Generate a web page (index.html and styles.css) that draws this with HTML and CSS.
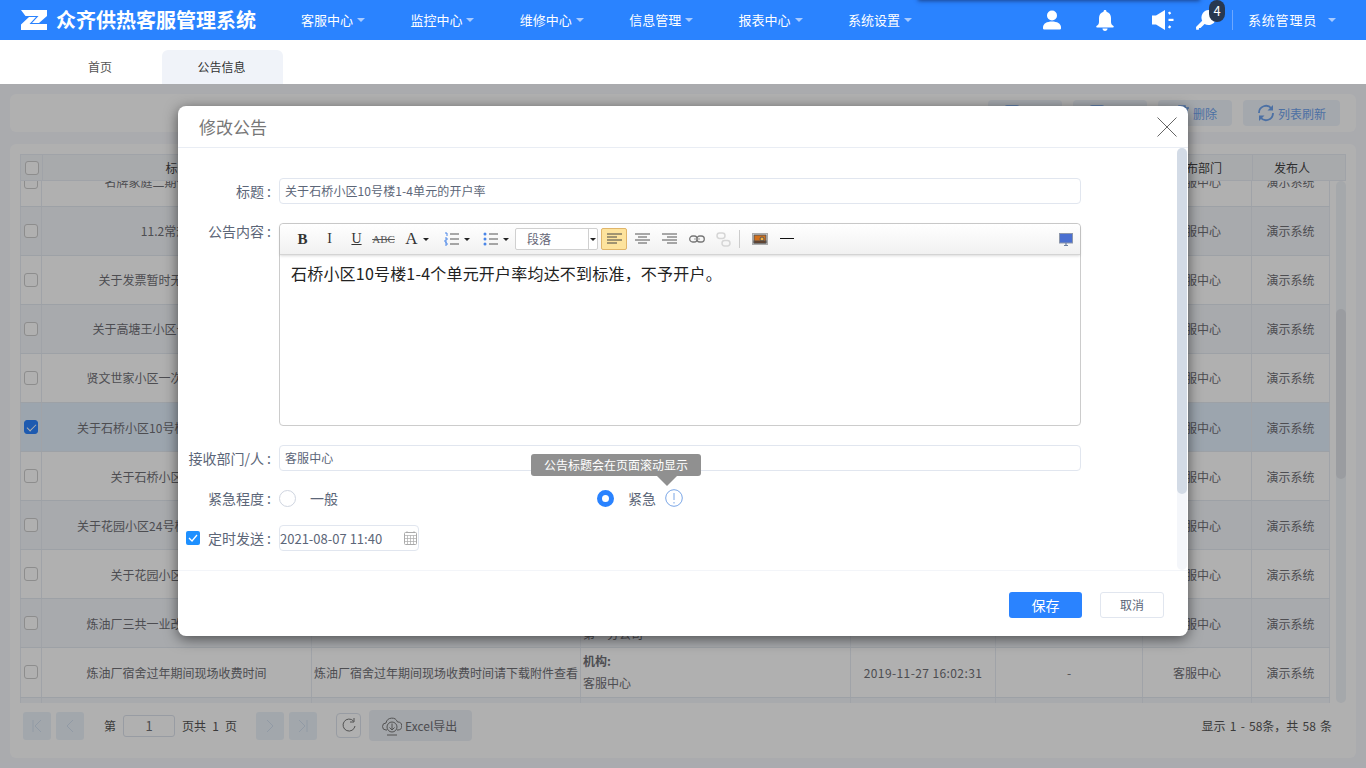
FILE: index.html
```html
<!DOCTYPE html>
<html lang="zh-CN">
<head>
  <meta charset="utf-8">
  <title>众齐供热客服管理系统</title>
  <link rel="stylesheet" href="styles.css">
</head>
<body>

<div class="topbar">
  <div class="top-shade"></div>
  <svg class="logo" width="26" height="20" viewBox="0 0 26 20">
    <path fill="#fff" d="M0 0H26V6L18 13H11L17.500 6H4.500Z"/>
    <path fill="#fff" d="M0 20V14.500L8 7H15L8.500 14H26V20Z"/>
  </svg>
  <div class="sys-name">众齐供热客服管理系统</div>
  <ul class="nav">
    <li>客服中心<i class="caret"></i></li>
    <li>监控中心<i class="caret"></i></li>
    <li>维修中心<i class="caret"></i></li>
    <li>信息管理<i class="caret"></i></li>
    <li>报表中心<i class="caret"></i></li>
    <li>系统设置<i class="caret"></i></li>
  </ul>
  <div class="top-tools">
    <svg class="t-user" width="18" height="20" viewBox="0 0 18 20"><circle cx="9" cy="5.500" r="5"/><path d="M1 19.500C0 19.500 0 18.500 0 17.500C0 13.500 4 11.500 9 11.500C14 11.500 18 13.500 18 17.500C18 18.500 18 19.500 17 19.500Z"/></svg>
    <svg class="t-bell" width="18" height="21" viewBox="0 0 18 21"><path d="M9 0C10 0 10.500 .7 10.500 1.700C13.500 2.500 15 5 15 8V12C15 14 16 15 17.500 16C18 16.500 17.800 17.500 17 17.500H1C.2 17.500 0 16.500 .5 16C2 15 3 14 3 12V8C3 5 4.500 2.500 7.500 1.700C7.500 .7 8 0 9 0Z"/><path d="M6.500 18.500H11.500C11.500 20 10.500 21 9 21C7.500 21 6.500 20 6.500 18.500Z"/></svg>
    <svg class="t-horn" width="22" height="20" viewBox="0 0 22 20"><path d="M0 5.500H4L13 0V20L4 14.500H0Z"/><rect x="16.500" y="8.800" width="5" height="2.200"/><path d="M16 2.500L18 1.500L19.200 3.600L17.200 4.700Z"/><path d="M16 17.500L18 18.500L19.200 16.400L17.200 15.300Z"/></svg>
    <div class="t-key">
      <svg width="20" height="20" viewBox="0 0 20 20"><path d="M12.500 0A7.500 7.500 0 1 1 8.600 13.900L4.500 18L3 18L2.800 19.800L.2 19.800L0 17L6.200 10.800A7.500 7.500 0 0 1 12.500 0Z"/></svg>
      <span class="badge">4</span>
    </div>
    <div class="t-sep"></div>
    <div class="t-name">系统管理员</div>
    <i class="caret t-caret"></i>
  </div>
</div>

<div class="tabs">
  <div class="tab">首页</div>
  <div class="tab on">公告信息</div>
</div>

<div class="content">
  <div class="toolcard">
    <div class="tbtn w74"><svg width="16" height="16" viewBox="0 0 16 16"><rect x="1" y="1" width="14" height="14" rx="2"/></svg></div>
    <div class="tbtn w74"><svg width="16" height="16" viewBox="0 0 16 16"><rect x="1" y="1" width="14" height="14" rx="2"/></svg></div>
    <div class="tbtn w74"><svg width="16" height="16" viewBox="0 0 16 16"><path d="M1 3H15M5 3V1H11V3M3 3V15H13V3"/></svg>删除</div>
    <div class="tbtn w96"><svg width="18" height="18" viewBox="0 0 18 18"><path d="M2 9A7 7 0 0 1 14.500 4.500M16 9A7 7 0 0 1 3.500 13.500" stroke-width="1.800"/><path class="fill" d="M16 1V6.500H10.500Z"/><path class="fill" d="M2 17V11.500H7.500Z"/></svg>列表刷新</div>
  </div>

  <div class="listcard">
    <div class="thead">
      <div class="hcell c0"><i class="chk"></i></div>
      <div class="hcell c1">标题</div>
      <div class="hcell c2"></div>
      <div class="hcell c3"></div>
      <div class="hcell c4"></div>
      <div class="hcell c5"></div>
      <div class="hcell c6">发布部门</div>
      <div class="hcell c7">发布人</div>
    </div>
    <div class="tbody-wrap">
      <div class="tbody">
        <div class="row"><div class="c0"><i class="chk"></i></div><div class="c1">名牌家庭二期供热运行通知</div><div class="c2"></div><div class="c3"></div><div class="c4"></div><div class="c5"></div><div class="c6">客服中心</div><div class="c7">演示系统</div></div>
        <div class="row"><div class="c0"><i class="chk"></i></div><div class="c1">11.2常规通知</div><div class="c2"></div><div class="c3"></div><div class="c4"></div><div class="c5"></div><div class="c6">客服中心</div><div class="c7">演示系统</div></div>
        <div class="row"><div class="c0"><i class="chk"></i></div><div class="c1">关于发票暂时无法开具的通知</div><div class="c2"></div><div class="c3"></div><div class="c4"></div><div class="c5"></div><div class="c6">客服中心</div><div class="c7">演示系统</div></div>
        <div class="row"><div class="c0"><i class="chk"></i></div><div class="c1">关于高塘王小区一次网检修通知</div><div class="c2"></div><div class="c3"></div><div class="c4"></div><div class="c5"></div><div class="c6">客服中心</div><div class="c7">演示系统</div></div>
        <div class="row"><div class="c0"><i class="chk"></i></div><div class="c1">贤文世家小区一次网管线检修通知</div><div class="c2"></div><div class="c3"></div><div class="c4"></div><div class="c5"></div><div class="c6">客服中心</div><div class="c7">演示系统</div></div>
        <div class="row sel"><div class="c0"><i class="chk on"></i></div><div class="c1">关于石桥小区10号楼1-4单元的开户率</div><div class="c2"></div><div class="c3"></div><div class="c4"></div><div class="c5"></div><div class="c6">客服中心</div><div class="c7">演示系统</div></div>
        <div class="row"><div class="c0"><i class="chk"></i></div><div class="c1">关于石桥小区的开户通知</div><div class="c2"></div><div class="c3"></div><div class="c4"></div><div class="c5"></div><div class="c6">客服中心</div><div class="c7">演示系统</div></div>
        <div class="row"><div class="c0"><i class="chk"></i></div><div class="c1">关于花园小区24号楼1-2单元的开户率</div><div class="c2"></div><div class="c3"></div><div class="c4"></div><div class="c5"></div><div class="c6">客服中心</div><div class="c7">演示系统</div></div>
        <div class="row"><div class="c0"><i class="chk"></i></div><div class="c1">关于花园小区的开户通知</div><div class="c2"></div><div class="c3"></div><div class="c4"></div><div class="c5"></div><div class="c6">客服中心</div><div class="c7">演示系统</div></div>
        <div class="row"><div class="c0"><i class="chk"></i></div><div class="c1">炼油厂三共一业改造现场收费时间</div><div class="c2"></div><div class="c3"><b>机构:</b><span>第一分公司</span></div><div class="c4"></div><div class="c5"></div><div class="c6">客服中心</div><div class="c7">演示系统</div></div>
        <div class="row"><div class="c0"><i class="chk"></i></div><div class="c1">炼油厂宿舍过年期间现场收费时间</div><div class="c2">炼油厂宿舍过年期间现场收费时间请下载附件查看</div><div class="c3"><b>机构:</b><span>客服中心</span></div><div class="c4">2019-11-27 16:02:31</div><div class="c5">-</div><div class="c6">客服中心</div><div class="c7">演示系统</div></div>
        <div class="row"><div class="c0"><i class="chk"></i></div><div class="c1"></div><div class="c2"></div><div class="c3"></div><div class="c4"></div><div class="c5"></div><div class="c6"></div><div class="c7"></div></div>
      </div>
      <div class="vbar"><div class="vthumb"></div></div>
    </div>

    <div class="pager">
      <div class="pbtn"><svg width="12" height="14" viewBox="0 0 12 14"><path d="M2 1V13M10 1L4 7L10 13"/></svg></div>
      <div class="pbtn"><svg width="12" height="14" viewBox="0 0 12 14"><path d="M9 1L3 7L9 13"/></svg></div>
      <span class="ptext first">第</span>
      <div class="pinput">1</div>
      <span class="ptext wide">页共 1 页</span>
      <div class="pbtn next"><svg width="12" height="14" viewBox="0 0 12 14"><path d="M3 1L9 7L3 13"/></svg></div>
      <div class="pbtn"><svg width="12" height="14" viewBox="0 0 12 14"><path d="M2 1L8 7L2 13M10 1V13"/></svg></div>
      <div class="prefresh"><svg width="14" height="15" viewBox="0 0 14 15"><path d="M11.500 3A6 6 0 1 0 13 8"/><path d="M12 0V4H8"/></svg></div>
      <div class="pexcel"><svg width="20" height="20" viewBox="0 0 20 20"><path d="M5 14H4A3.500 3.500 0 0 1 4 7A6 6 0 0 1 15.500 6A4 4 0 0 1 16 14H15"/><circle cx="10" cy="11" r="5"/><path d="M10 7.500V13.500M7.500 11.500L10 14L12.500 11.500M5 19H15"/></svg>Excel导出</div>
      <div class="pinfo">显示 1 - 58条，共 58 条</div>
    </div>
  </div>

  <div class="mask"></div>

  <div class="dialog">
    <div class="d-title">
      修改公告
      <svg class="d-close" width="20" height="20" viewBox="0 0 20 20"><path d="M.5 .5L19.500 19.500M19.500 .5L.5 19.500"/></svg>
    </div>
    <div class="d-body">
      <div class="frow">
        <label class="flabel">标题 :</label>
        <div class="finput">关于石桥小区10号楼1-4单元的开户率</div>
      </div>
      <div class="frow">
        <label class="flabel top">公告内容 :</label>
        <div class="editor">
          <div class="etools">
            <span class="eb tx"><b>B</b></span>
            <span class="eb tx"><em>I</em></span>
            <span class="eb tx"><u>U</u></span>
            <span class="eb tx abc"><s>ABC</s></span>
            <span class="eb dd w40 tx big">A<i class="mini"></i></span>
            <span class="eb dd w39"><svg width="15" height="14" viewBox="0 0 15 14"><path class="num" d="M1 1H3V4M1 6H3V8H1V10H3M1 11H3V13H1"/><path d="M6 2H15M6 7H15M6 12H15"/></svg><i class="mini"></i></span>
            <span class="eb dd w39"><svg width="15" height="14" viewBox="0 0 15 14"><circle class="dot" cx="2" cy="2" r="1.500"/><circle class="dot" cx="2" cy="7" r="1.500"/><circle class="dot" cx="2" cy="12" r="1.500"/><path d="M6 2H15M6 7H15M6 12H15"/></svg><i class="mini"></i></span>
            <span class="esel"><span class="esel-text">段落</span><span class="esel-arrow"><i class="mini"></i></span></span>
            <span class="eb active"><svg width="15" height="12" viewBox="0 0 15 12"><path d="M0 1H15M0 4H10M0 7H15M0 10H10"/></svg></span>
            <span class="eb ml2"><svg width="15" height="12" viewBox="0 0 15 12"><path d="M0 1H15M3 4H12M0 7H15M3 10H12"/></svg></span>
            <span class="eb"><svg width="15" height="12" viewBox="0 0 15 12"><path d="M0 1H15M5 4H15M0 7H15M5 10H15"/></svg></span>
            <span class="eb"><svg width="16" height="8" viewBox="0 0 16 8"><rect x=".7" y="1" width="7.500" height="6" rx="3" stroke="#777" stroke-width="1.300"/><rect x="7.800" y="1" width="7.500" height="6" rx="3" stroke="#777" stroke-width="1.300"/><path d="M5 4H11" stroke="#999"/></svg></span>
            <span class="eb"><svg width="15" height="15" viewBox="0 0 15 15"><rect x="1" y="1" width="8" height="5.500" rx="2.700" stroke="#d6d6d6" stroke-width="1.500"/><rect x="6" y="8.500" width="8" height="5.500" rx="2.700" stroke="#d6d6d6" stroke-width="1.500"/></svg></span>
            <span class="esep"></span>
            <span class="eb"><svg width="16" height="12" viewBox="0 0 16 12"><rect x=".5" y=".5" width="15" height="11" fill="#eee" stroke="#aaa"/><rect x="2" y="2" width="12" height="8" fill="#d2701c"/><circle cx="10" cy="6" r="2" fill="#f5b342"/><rect x="2" y="8" width="12" height="2" fill="#6a3412"/></svg></span>
            <span class="eb"><svg width="14" height="2" viewBox="0 0 14 2"><path d="M0 .5H14" stroke="#111"/></svg></span>
            <span class="eb right"><svg width="14" height="13" viewBox="0 0 14 13"><rect x=".5" y=".5" width="13" height="9.500" fill="#4a6fd0" stroke="#8d97ab"/><path d="M5 12.500H9M7 10V12" stroke="#6d7f9f" stroke-width="1.200"/></svg></span>
          </div>
          <div class="etext">石桥小区10号楼1-4个单元开户率均达不到标准，不予开户。</div>
        </div>
      </div>
      <div class="frow">
        <label class="flabel">接收部门/人 :</label>
        <div class="finput">客服中心</div>
      </div>
      <div class="frow radios">
        <label class="flabel">紧急程度 :</label>
        <div class="ropt first"><i class="radio"></i><span>一般</span></div>
        <div class="ropt"><i class="radio on"></i><span>紧急</span>
          <svg class="info" width="18" height="18" viewBox="0 0 18 18"><circle cx="9" cy="9" r="8.300"/><path d="M9 4V11M9 13V14.500"/></svg>
        </div>
        <div class="tip">公告标题会在页面滚动显示</div>
      </div>
      <div class="frow dates">
        <label class="flabel"><i class="chk2"><svg width="10" height="8" viewBox="0 0 10 8"><path d="M1 4L4 7L9 1"/></svg></i>定时发送 :</label>
        <div class="fdate">2021-08-07 11:40
          <svg width="13" height="14" viewBox="0 0 13 14"><rect x=".5" y="1.500" width="12" height="12" rx="1"/><path d="M0 4.500H13M3 0V2M10 0V2M0 7.500H13M0 10.500H13M3.500 4.500V14M6.500 4.500V14M9.500 4.500V14" stroke-width=".7"/></svg>
        </div>
      </div>
      <div class="dbar"><div class="dthumb"></div></div>
    </div>
    <div class="d-foot">
      <div class="btn-save">保存</div>
      <div class="btn-cancel">取消</div>
    </div>
  </div>
</div>

</body>
</html>
```

FILE: styles.css
```css
* {
  box-sizing: border-box;
}
html, body {
  margin: 0;
  height: 768px;
  overflow: hidden;
  background: #fff;
  font-family: "Noto Sans CJK SC", "Noto Sans", sans-serif;
  font-size: 12px;
  color: #707076;
}
i, em {
  font-style: normal;
}

/* top bar */
.topbar {
  position: relative;
  display: flex;
  align-items: center;
  height: 40px;
  padding-left: 21px;
  overflow: hidden;
  background: #2a83ff;
  color: #fff;
}
.top-shade {
  position: absolute;
  left: 918px;
  top: -20px;
  width: 282px;
  height: 20px;
  box-shadow: 0 1px 4px rgba(20, 40, 90, .7);
  background: #2a83ff;
}
.logo {
  flex: none;
}
.sys-name {
  margin-left: 9px;
  width: 245px;
  font-size: 20px;
  font-weight: 700;
  line-height: 40px;
  white-space: nowrap;
}
.nav {
  display: flex;
  margin: 0;
  padding: 0;
  list-style: none;
}
.nav li {
  width: 109.400px;
  font-size: 13px;
  line-height: 40px;
  white-space: nowrap;
}
.caret {
  display: inline-block;
  margin-left: 4px;
  vertical-align: 3px;
  border-left: 4px solid transparent;
  border-right: 4px solid transparent;
  border-top: 4px solid #a9cbff;
}
.top-tools {
  position: absolute;
  left: 1043px;
  top: 0;
  display: flex;
  align-items: center;
  height: 40px;
}
.top-tools svg {
  fill: #fff;
  flex: none;
}
.t-bell {
  margin-left: 35px;
}
.t-horn {
  margin-left: 38px;
}
.t-key {
  position: relative;
  width: 25px;
  height: 20px;
  margin-left: 22px;
}
.badge {
  position: absolute;
  left: 13px;
  top: -10px;
  width: 16px;
  height: 22px;
  border-radius: 8px;
  background: #283850;
  font-size: 13px;
  line-height: 22px;
  text-align: center;
}
.t-sep {
  width: 1px;
  height: 20px;
  margin-left: 11px;
  background: #6ea8ff;
}
.t-name {
  margin-left: 15px;
  padding-bottom: 2px;
  font-size: 13px;
  letter-spacing: .8px;
  white-space: nowrap;
}
.t-caret {
  margin-left: 11px;
}

/* tabs */
.tabs {
  display: flex;
  align-items: flex-end;
  height: 44px;
  padding-left: 38px;
  background: #fff;
}
.tab {
  width: 124px;
  height: 34px;
  border-radius: 6px 6px 0 0;
  color: #555;
  line-height: 34px;
  text-align: center;
}
.tab.on {
  width: 121px;
  padding-right: 2px;
  background: #f0f3f9;
  color: #333;
}

/* page under the mask */
.content {
  position: relative;
  height: 684px;
  padding: 10px;
  overflow: hidden;
  background: #f6f8fd;
}
.toolcard {
  display: flex;
  justify-content: flex-end;
  gap: 11px;
  height: 38px;
  padding: 6px 16px 0 0;
  border-radius: 6px;
  background: #fff;
}
.tbtn {
  display: flex;
  align-items: center;
  height: 26px;
  padding-left: 14px;
  border-radius: 4px;
  background: #eef3fb;
  color: #6ea3ee;
}
.w74 {
  width: 74px;
  padding-left: 16px;
}
.w96 {
  width: 97px;
}
.tbtn svg {
  margin-right: 3px;
  fill: none;
  stroke: #6ea3ee;
  stroke-width: 1.500;
}
.tbtn svg .fill {
  fill: #6ea3ee;
  stroke: none;
}
.listcard {
  height: 614px;
  margin-top: 12px;
  padding: 10px 10px 0;
  border-radius: 6px;
  background: #fff;
}
.thead {
  display: grid;
  grid-template-columns: 22px 270px 269px 270px 145px 147px 109px 94px;
  height: 27px;
  border: 1px solid #e8edf4;
  background: #f4f6fa;
  color: #444;
  line-height: 25px;
  text-align: center;
}
.hcell {
  border-right: 1px solid #e8edf4;
}
.hcell.c7 {
  border-right: 0;
  padding-right: 16px;
}
.hcell.c0 {
  display: flex;
  align-items: center;
  justify-content: center;
  padding-left: 1px;
}
.tbody-wrap {
  position: relative;
  height: 522px;
  overflow: hidden;
}
.tbody {
  width: 1310px;
  margin-top: -23.500px;
}
.row {
  display: grid;
  grid-template-columns: 22px 270px 269px 270px 145px 147px 109px 78px;
  height: 49.100px;
  border-bottom: 1px solid #e4e9f1;
  background: #fff;
}
.row:nth-child(even) {
  background: #f3f6fb;
}
.row.sel {
  background: #e3effd;
}
.row > div {
  display: flex;
  align-items: center;
  justify-content: center;
  padding: 0 2px;
  border-right: 1px solid #e8edf4;
  white-space: nowrap;
}
.row > div:first-child {
  border-left: 1px solid #e8edf4;
}
.row .c3 {
  flex-direction: column;
  align-items: flex-start;
  line-height: 22px;
}
.row .c2 {
  justify-content: flex-start;
}
.row .c4 {
  letter-spacing: .4px;
}
.chk {
  display: block;
  flex: none;
  width: 14px;
  height: 14px;
  border: 1px solid #ccc;
  border-radius: 3px;
  background: #fff;
}
.chk.on {
  position: relative;
  border-color: #2a83ff;
  background: #2a83ff;
}
.chk.on::after {
  content: "";
  position: absolute;
  left: 4px;
  top: 1px;
  width: 4px;
  height: 8px;
  border: solid #fff;
  border-width: 0 1.500px 1.500px 0;
  transform: rotate(45deg);
}
.vbar {
  position: absolute;
  right: 0;
  top: 0;
  width: 10px;
  height: 100%;
  border-radius: 5px;
  background: #f0f3f8;
}
.vthumb {
  height: 170px;
  margin-top: 128px;
  border-radius: 5px;
  background: #e0e3e8;
}

/* pager */
.pager {
  display: flex;
  align-items: center;
  height: 45px;
  padding-left: 3px;
}
.pbtn {
  display: flex;
  align-items: center;
  justify-content: center;
  width: 28px;
  height: 28px;
  margin-right: 5px;
  border-radius: 3px;
  background: #ebf2f9;
}
.pbtn svg {
  fill: none;
  stroke: #d3e0f0;
}
.pbtn.next {
  margin-left: 19px;
}
.ptext {
  color: #555;
}
.ptext.first {
  margin-left: 15px;
}
.ptext.wide {
  word-spacing: 3.500px;
}
.pinput {
  width: 52px;
  height: 22px;
  margin: 0 7px;
  border: 1px solid #dde3ec;
  border-radius: 3px;
  background: #fff;
  font-size: 13px;
  line-height: 20px;
  text-align: center;
}
.prefresh {
  display: flex;
  align-items: center;
  justify-content: center;
  width: 25px;
  height: 25px;
  margin-left: 14px;
  border: 1px solid #dde3ec;
  border-radius: 4px;
}
.prefresh svg, .pexcel svg {
  fill: none;
  stroke: #777;
}
.pexcel {
  display: flex;
  align-items: center;
  gap: 3px;
  width: 103px;
  height: 31px;
  margin-left: 8px;
  padding-left: 13px;
  border-radius: 4px;
  background: #edf1f7;
  white-space: nowrap;
}
.pinfo {
  margin-left: auto;
  padding-right: 14px;
  color: #555;
  word-spacing: 1.500px;
}

.mask {
  position: absolute;
  inset: 0;
  background: rgba(0, 0, 0, .31);
}

/* dialog */
.dialog {
  position: absolute;
  left: 178px;
  top: 22px;
  width: 1010px;
  height: 530px;
  border-radius: 8px;
  background: #fff;
  box-shadow: 0 3px 14px rgba(0, 0, 0, .55);
}
.d-title {
  position: relative;
  height: 42px;
  padding-left: 21px;
  border-bottom: 1px solid #e9edf4;
  color: #777;
  font-size: 17px;
  line-height: 42px;
}
.d-close {
  position: absolute;
  right: 11px;
  top: 11px;
  fill: none;
  stroke: #666;
}
.d-body {
  position: relative;
  height: 423px;
  padding-top: 30px;
  overflow: hidden;
  border-bottom: 1px solid #f3f5f9;
}
.frow {
  position: relative;
  display: flex;
  margin-bottom: 19px;
}
.flabel {
  display: flex;
  align-items: center;
  justify-content: flex-end;
  flex: none;
  width: 93px;
  margin-right: 8px;
  color: #5c6678;
  font-size: 14px;
  white-space: pre;
}
.flabel.top {
  align-items: flex-start;
  line-height: 16px;
}
.finput {
  width: 802px;
  height: 26px;
  padding-left: 5px;
  border: 1px solid #e1e6ef;
  border-radius: 4px;
  color: #5c6678;
  letter-spacing: .1px;
  line-height: 24px;
}
.editor {
  width: 802px;
  height: 203px;
  border: 1px solid #ccc;
  border-radius: 4px;
}
.etools {
  display: flex;
  align-items: center;
  height: 31px;
  padding-left: 9px;
  border-radius: 4px 4px 0 0;
  border-bottom: 1px solid #d4d4d4;
  background: linear-gradient(#fff, #f1f1f1);
  box-shadow: 0 1px 3px rgba(0, 0, 0, .15);
}
.eb {
  display: flex;
  align-items: center;
  justify-content: center;
  flex: none;
  width: 27px;
  height: 22px;
}
.eb svg {
  fill: none;
  stroke: #555;
}
.eb.tx {
  color: #333;
  font-family: "Liberation Serif", serif;
  font-size: 14px;
}
.eb.tx b {
  font-size: 15px;
}
.eb.abc {
  color: #555;
  font-size: 11px;
}
.eb.big {
  font-size: 17px;
}
.eb svg .num {
  stroke: #4a86e8;
}
.eb svg .dot {
  fill: #4a86e8;
  stroke: none;
}
.dd {
  gap: 5px;
  padding-right: 0;
}
.w40 {
  width: 40px;
}
.w39 {
  width: 39px;
}
.mini {
  display: inline-block;
  border-left: 3px solid transparent;
  border-right: 3px solid transparent;
  border-top: 3px solid #222;
}
.esel {
  display: flex;
  flex: none;
  width: 83px;
  height: 22px;
  margin-right: 3px;
  border: 1px solid #d0d0d0;
  border-radius: 2px;
  background: #fff;
  color: #667;
  line-height: 20px;
}
.esel-text {
  width: 73px;
  padding-left: 11px;
  border-right: 1px solid #d0d0d0;
}
.esel-arrow {
  display: flex;
  align-items: center;
  justify-content: center;
  flex: 1;
}
.eb.active {
  width: 26px;
  border: 1px solid #e0b56a;
  border-radius: 2px;
  background: #fde39d;
}
.eb.active svg {
  stroke: #444;
}
.ml2 {
  margin-left: 2px;
}
.esep {
  flex: none;
  width: 1px;
  height: 18px;
  margin: 0 6px 0 2px;
  background: #ccc;
}
.eb.right {
  margin-left: auto;
  margin-right: 1px;
}
.etext {
  padding: 6px 11px;
  color: #222;
  font-size: 16px;
  letter-spacing: .2px;
  line-height: 24px;
}
.radios {
  align-items: center;
  height: 24px;
  margin: -4px 0 15px;
}
.ropt {
  display: flex;
  align-items: center;
  color: #5c6678;
  font-size: 14px;
}
.ropt.first {
  width: 318px;
}
.radio {
  display: block;
  width: 17px;
  height: 17px;
  margin-right: 14px;
  border: 1px solid #cfd5e0;
  border-radius: 50%;
  background: #fff;
}
.radio.on {
  border: 5px solid #2a83ff;
}
.info {
  margin-left: 9px;
  fill: none;
  stroke: #7aa6e6;
}
.tip {
  position: absolute;
  left: 353px;
  top: -32px;
  width: 170px;
  height: 22px;
  border-radius: 3px;
  background: #909090;
  color: #fff;
  line-height: 22px;
  text-align: center;
}
.tip::after {
  content: "";
  position: absolute;
  left: 126px;
  top: 22px;
  border-left: 10px solid transparent;
  border-right: 10px solid transparent;
  border-top: 10px solid #909090;
}
.dates {
  margin-bottom: 0;
}
.chk2 {
  display: flex;
  align-items: center;
  justify-content: center;
  width: 14px;
  height: 14px;
  margin-right: 8px;
  border-radius: 2px;
  background: #1e90ff;
}
.chk2 svg {
  fill: none;
  stroke: #fff;
  stroke-width: 1.300;
}
.fdate {
  display: flex;
  align-items: center;
  justify-content: space-between;
  width: 140px;
  height: 26px;
  padding: 0 1px 0 0;
  border: 1px solid #e1e6ef;
  border-radius: 4px;
  color: #5c6678;
  font-size: 13px;
}
.fdate svg {
  fill: none;
  stroke: #aaa;
}
.dbar {
  position: absolute;
  right: 1px;
  top: 0;
  width: 10px;
  height: 100%;
  border-radius: 5px;
  background: #f4f6fa;
}
.dthumb {
  height: 346px;
  border-radius: 5px;
  background: #d3dbe6;
}
.d-foot {
  display: flex;
  justify-content: flex-end;
  gap: 18px;
  padding: 21px 24px 0 0;
}
.btn-save {
  width: 73px;
  height: 26px;
  border-radius: 3px;
  background: #2a83ff;
  color: #fff;
  font-size: 14px;
  line-height: 26px;
  text-align: center;
}
.btn-cancel {
  width: 64px;
  height: 26px;
  border: 1px solid #e1e6ef;
  border-radius: 3px;
  color: #5c6678;
  line-height: 24px;
  text-align: center;
}
```
